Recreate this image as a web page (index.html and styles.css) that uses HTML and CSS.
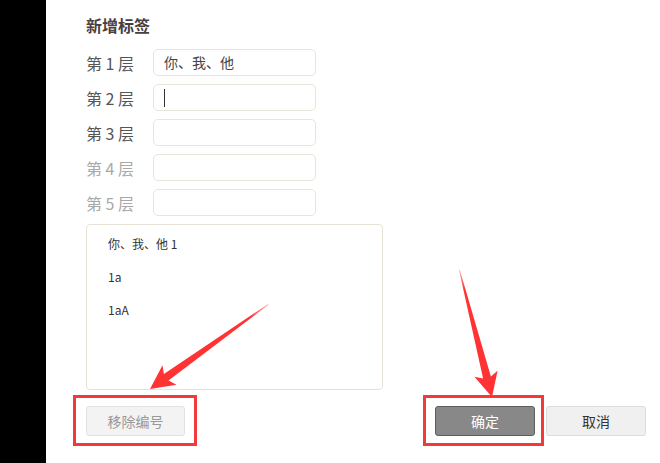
FILE: index.html
```html
<!DOCTYPE html>
<html lang="zh">
<head>
<meta charset="utf-8">
<link rel="stylesheet" href="styles.css">
</head>
<body>
<div class="page">
  <div class="sidebar"></div>
  <div class="main">
    <div class="title">新增标签</div>
    <div class="rows">
      <div class="row"><span class="label">第 1 层</span><div class="field">你、我、他</div></div>
      <div class="row"><span class="label">第 2 层</span><div class="field"><span class="caret"></span></div></div>
      <div class="row"><span class="label">第 3 层</span><div class="field"></div></div>
      <div class="row dim"><span class="label">第 4 层</span><div class="field"></div></div>
      <div class="row dim"><span class="label">第 5 层</span><div class="field"></div></div>
    </div>
    <div class="preview">
      <div class="item">你、我、他 1</div>
      <div class="item">1a</div>
      <div class="item">1aA</div>
    </div>
    <div class="footer">
      <button class="btn btn-light">移除编号</button>
      <div class="actions">
        <button class="btn btn-primary">确定</button>
        <button class="btn btn-cancel">取消</button>
      </div>
    </div>
  </div>
</div>
<div class="mark mark-left"></div>
<div class="mark mark-right"></div>
<svg class="arrows" width="660" height="463" viewBox="0 0 660 463">
  <defs>
    <linearGradient id="g1" x1="268" y1="304" x2="150" y2="389" gradientUnits="userSpaceOnUse">
      <stop offset="0" stop-color="#f44" stop-opacity="0.4"/>
      <stop offset="0.15" stop-color="#f33"/>
      <stop offset="1" stop-color="#f33"/>
    </linearGradient>
    <linearGradient id="g2" x1="459" y1="270" x2="492" y2="397" gradientUnits="userSpaceOnUse">
      <stop offset="0" stop-color="#f44" stop-opacity="0.4"/>
      <stop offset="0.15" stop-color="#f33"/>
      <stop offset="1" stop-color="#f33"/>
    </linearGradient>
  </defs>
  <polygon fill="url(#g1)" points="268,304 163.9,374.1 162.5,365.3 150,389 176.5,384.7 168.5,380.5 268.6,304.8"/>
  <polygon fill="url(#g2)" points="459,270 483.1,378.6 474.4,376.8 492,397 497.6,370.8 490.9,376.6 459.8,269.8"/>
</svg>
</body>
</html>
```

FILE: styles.css
```css
html, body {
  margin: 0;
  padding: 0;
  background: #fff;
}
body {
  width: 660px;
  height: 463px;
  overflow: hidden;
  position: relative;
  font-family: "Noto Sans CJK SC", "Liberation Sans", sans-serif;
}
.page {
  display: flex;
  height: 463px;
}
.sidebar {
  width: 46px;
  background: #000;
  flex: none;
}
.main {
  flex: 1;
  padding: 15px 14px 0 40px;
  display: flex;
  flex-direction: column;
}
.title {
  font-size: 16px;
  line-height: 20px;
  font-weight: bold;
  color: #4a3f3f;
  margin-bottom: 14px;
}
.rows {
  display: flex;
  flex-direction: column;
  gap: 8px;
}
.row {
  display: flex;
  align-items: center;
  height: 27px;
}
.label {
  width: 67px;
  font-size: 16px;
  color: #555;
  white-space: pre;
}
.row.dim .label {
  color: #a8a8a8;
}
.field {
  box-sizing: border-box;
  width: 163px;
  height: 27px;
  border: 1px solid #e8e5da;
  border-radius: 5px;
  background: #fff;
  font-size: 14px;
  line-height: 25px;
  color: #444;
  padding-left: 10px;
  display: flex;
  align-items: center;
}
.caret {
  display: block;
  width: 1px;
  height: 18px;
  background: #333;
}
.preview {
  box-sizing: border-box;
  margin-top: 8px;
  width: 297px;
  height: 166px;
  border: 1px solid #e6e3d6;
  border-radius: 4px;
  padding: 9px 0 0 21px;
}
.item {
  font-size: 12px;
  line-height: 20px;
  height: 33px;
  color: #333;
}
.footer {
  margin-top: 16px;
  display: flex;
  justify-content: space-between;
}
.actions {
  display: flex;
  gap: 11px;
}
.btn {
  box-sizing: border-box;
  width: 100px;
  height: 30px;
  border-radius: 3px;
  font-family: "Noto Sans CJK SC", "Liberation Sans", sans-serif;
  font-size: 14px;
  padding: 0;
}
.btn-light {
  width: 99px;
  background: #f3f3f3;
  border: 1px solid #e2e2e2;
  color: #999;
}
.btn-primary {
  background: #888;
  border: 1px solid #5e5e5e;
  color: #fff;
}
.btn-cancel {
  background: #f0f0f0;
  border: 1px solid #dcdcdc;
  color: #333;
}
.mark {
  position: absolute;
  box-sizing: border-box;
  border: 3px solid #f23a3a;
}
.mark-left {
  left: 73px;
  top: 395px;
  width: 124px;
  height: 51px;
}
.mark-right {
  left: 423px;
  top: 395px;
  width: 121px;
  height: 51px;
}
.arrows {
  position: absolute;
  left: 0;
  top: 0;
  pointer-events: none;
}
```
